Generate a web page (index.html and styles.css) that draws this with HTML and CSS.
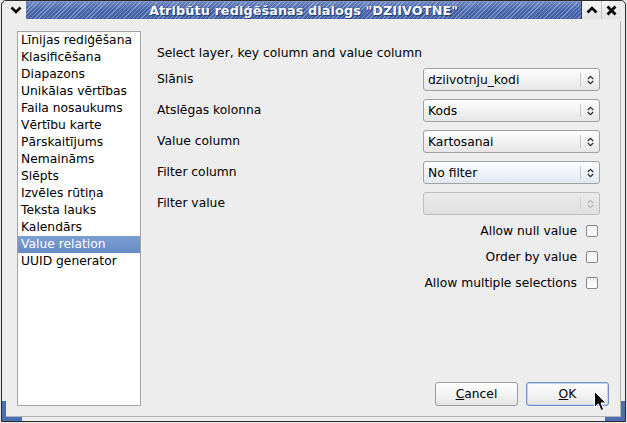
FILE: index.html
```html
<!DOCTYPE html>
<html lang="lv">
<head>
<meta charset="utf-8">
<title>Atribūtu rediģēšanas dialogs</title>
<link rel="stylesheet" href="styles.css">
</head>
<body>
<div class="window">
  <div class="frame">
    <div class="titlebar">
      <div class="tb-btn tb-menu">
        <svg width="12" height="8" viewBox="0 0 12 8"><path d="M1.5 1.5 L6 6 L10.5 1.5" fill="none" stroke="#000" stroke-width="2.6"/></svg>
      </div>
      <div class="tb-title"><span>Atribūtu rediģēšanas dialogs "DZIIVOTNE"</span></div>
      <div class="tb-btn tb-up">
        <svg width="12" height="8" viewBox="0 0 12 8"><path d="M1.5 6.5 L6 2 L10.5 6.5" fill="none" stroke="#000" stroke-width="2.6"/></svg>
      </div>
      <div class="tb-btn tb-close">
        <svg width="11" height="11" viewBox="0 0 11 11"><path d="M1.5 1.5 L9.5 9.5 M9.5 1.5 L1.5 9.5" fill="none" stroke="#000" stroke-width="2.8"/></svg>
      </div>
    </div>

    <div class="client">
      <ul class="types">
        <li>Līnijas rediģēšana</li>
        <li>Klasificēšana</li>
        <li>Diapazons</li>
        <li>Unikālas vērtības</li>
        <li>Faila nosaukums</li>
        <li>Vērtību karte</li>
        <li>Pārskaitījums</li>
        <li>Nemaināms</li>
        <li>Slēpts</li>
        <li>Izvēles rūtiņa</li>
        <li>Teksta lauks</li>
        <li>Kalendārs</li>
        <li class="selected">Value relation</li>
        <li>UUID generator</li>
      </ul>

      <div class="side">
        <div class="page">
          <div class="intro">Select layer, key column and value column</div>
          <div class="form">
            <span class="label">Slānis</span>
            <div class="combo"><span class="value">dziivotnju_kodi</span><span class="sep"></span><span class="arrows"><svg width="7" height="10" viewBox="0 0 7 10"><path d="M0.8 4 L3.5 1.3 L6.2 4 M0.8 6 L3.5 8.7 L6.2 6" fill="none" stroke="#2a2a2a" stroke-width="1.2"/></svg></span></div>

            <span class="label">Atslēgas kolonna</span>
            <div class="combo"><span class="value">Kods</span><span class="sep"></span><span class="arrows"><svg width="7" height="10" viewBox="0 0 7 10"><path d="M0.8 4 L3.5 1.3 L6.2 4 M0.8 6 L3.5 8.7 L6.2 6" fill="none" stroke="#2a2a2a" stroke-width="1.2"/></svg></span></div>

            <span class="label">Value column</span>
            <div class="combo"><span class="value">Kartosanai</span><span class="sep"></span><span class="arrows"><svg width="7" height="10" viewBox="0 0 7 10"><path d="M0.8 4 L3.5 1.3 L6.2 4 M0.8 6 L3.5 8.7 L6.2 6" fill="none" stroke="#2a2a2a" stroke-width="1.2"/></svg></span></div>

            <span class="label">Filter column</span>
            <div class="combo combo-hover"><span class="value">No filter</span><span class="sep"></span><span class="arrows"><svg width="7" height="10" viewBox="0 0 7 10"><path d="M0.8 4 L3.5 1.3 L6.2 4 M0.8 6 L3.5 8.7 L6.2 6" fill="none" stroke="#2a2a2a" stroke-width="1.2"/></svg></span></div>

            <span class="label">Filter value</span>
            <div class="combo combo-disabled"><span class="value"></span><span class="sep"></span><span class="arrows"><svg width="7" height="10" viewBox="0 0 7 10"><path d="M0.8 4 L3.5 1.3 L6.2 4 M0.8 6 L3.5 8.7 L6.2 6" fill="none" stroke="#b4b4b4" stroke-width="1.2"/></svg></span></div>
          </div>

          <div class="checks">
            <div class="check"><span>Allow null value</span><span class="box"></span></div>
            <div class="check"><span>Order by value</span><span class="box"></span></div>
            <div class="check"><span>Allow multiple selections</span><span class="box"></span></div>
          </div>
        </div>

        <div class="buttons">
          <button class="btn"><u>C</u>ancel</button>
          <button class="btn btn-default"><u>O</u>K</button>
        </div>
      </div>
    </div>
  </div>

  <div class="corner corner-bl"></div>
  <div class="corner corner-br"></div>

  <svg class="pointer" width="13" height="21" viewBox="0 0 13 21"><path d="M0.5 0.5 L0.5 16.5 L4.3 12.8 L7 19.5 L9.6 18.4 L7 11.9 L12 11.9 Z" fill="#000" stroke="#fff" stroke-width="1" stroke-linejoin="miter"/></svg>
</div>
</body>
</html>
```

FILE: styles.css
```css
html, body {
  margin: 0;
  padding: 0;
  background: #e6e6e6;
}

body {
  font-family: "DejaVu Sans", "Noto Sans", sans-serif;
  font-size: 12.3px;
  color: #000;
}

.window {
  position: relative;
  width: 627px;
  height: 423px;
  box-sizing: border-box;
  padding: 0 1px 1px 1px;
  background: #e6e6e6;
}

.frame {
  height: 100%;
  box-sizing: border-box;
  border: 1px solid #2c2c2c;
  border-radius: 5px 5px 0 0;
  padding: 0 4px 4px 4px;
  background: #ededed;
  display: flex;
  flex-direction: column;
}

/* title bar */
.titlebar {
  height: 18px;
  margin-bottom: 2px;
  display: flex;
}

.tb-btn {
  width: 20px;
  display: flex;
  align-items: center;
  justify-content: center;
  background: linear-gradient(#f4f4f4, #e2e2e2);
}

.tb-menu {
  background: #ededed;
}

.tb-up {
  border-left: 1px solid #3a3a3a;
  width: 19px;
}

.tb-close {
  border-left: 1px solid #c0c0c0;
  width: 19px;
}

.tb-title {
  flex: 1;
  display: flex;
  align-items: center;
  justify-content: center;
  background:
    linear-gradient(rgba(255, 255, 255, 0.18), rgba(255, 255, 255, 0) 45%, rgba(0, 0, 40, 0.08)),
    repeating-linear-gradient(-45deg, #4865aa 0 2px, #7c96cc 2px 3px);
  border-top: 1px solid #7d93c4;
}

.tb-title span {
  font-weight: bold;
  font-size: 12.8px;
  color: #fff;
  text-shadow: 0 0 1px #1c3572, 1px 1px 0 #24407c;
  letter-spacing: 0.1px;
  white-space: nowrap;
}

/* dialog body */
.client {
  flex: 1;
  display: flex;
  padding: 10px 11px 10px 11px;
  border-bottom: 1px solid #b4b4b4;
  border-right: 1px solid #b4b4b4;
}

.types {
  list-style: none;
  margin: 0;
  padding: 0;
  width: 124px;
  box-sizing: border-box;
  border: 1px solid #a4a4a4;
  background: #fff;
}

.types li {
  height: 17px;
  line-height: 17px;
  padding-left: 3px;
  white-space: nowrap;
}

.types li.selected {
  background: linear-gradient(#7c9fd3, #6589c3);
  color: #fff;
}

.side {
  flex: 1;
  margin-left: 7px;
  display: flex;
  flex-direction: column;
}

.page {
  flex: 1;
  padding: 15px 9px 0 9px;
}

.intro {
  height: 15px;
  line-height: 15px;
  margin-bottom: 7px;
}

.form {
  display: grid;
  grid-template-columns: 1fr 177px;
  grid-auto-rows: 23px;
  row-gap: 8px;
  align-items: center;
}

.label {
  line-height: 15px;
}

.combo {
  height: 23px;
  box-sizing: border-box;
  border: 1px solid #a2a2a2;
  border-radius: 3px;
  background: linear-gradient(#fdfdfd, #f0f0f0 60%, #e6e6e6);
  display: flex;
  align-items: center;
}

.combo-hover {
  background: linear-gradient(#fbfcff, #eef2f8 60%, #e3e8f0);
}

.combo-disabled {
  border-color: #bdbdbd;
  background: linear-gradient(#eaeaea, #e0e0e0);
}

.combo .value {
  flex: 1;
  padding-left: 4px;
  white-space: nowrap;
}

.combo .sep {
  width: 1px;
  height: 13px;
  background: #c6c6c6;
}

.combo-disabled .sep {
  background: #d2d2d2;
}

.combo .arrows {
  width: 18px;
  display: flex;
  justify-content: center;
  align-items: center;
}

.checks {
  margin-top: 6px;
  display: flex;
  flex-direction: column;
  gap: 6px;
}

.check {
  height: 20px;
  display: flex;
  align-items: center;
  justify-content: flex-end;
  gap: 9px;
  padding-right: 2px;
}

.check .box {
  width: 12px;
  height: 12px;
  box-sizing: border-box;
  border: 1px solid #858585;
  border-radius: 2px;
  background: linear-gradient(#f2f2f2, #ffffff);
}

.buttons {
  display: flex;
  justify-content: flex-end;
  gap: 8px;
}

.btn {
  width: 83px;
  height: 24px;
  box-sizing: border-box;
  border: 1px solid #9c9c9c;
  border-radius: 3px;
  background: linear-gradient(#fefefe, #f2f2f2 55%, #e4e4e4);
  font-family: "DejaVu Sans", "Noto Sans", sans-serif;
  font-size: 12.3px;
  color: #000;
  padding: 0;
}

.btn-default {
  border-color: #7090c6;
  box-shadow: inset 0 0 0 1px #c6d5ee;
}

/* window frame corner grips */
.corner {
  position: absolute;
  top: 401px;
  width: 20px;
  height: 20px;
  box-sizing: border-box;
  border-bottom: 4px solid #4b6db3;
}

.corner-bl {
  left: 2px;
  border-left: 4px solid #4b6db3;
}

.corner-br {
  left: 605px;
  border-right: 4px solid #4b6db3;
}

.pointer {
  position: absolute;
  left: 594px;
  top: 391px;
}
```
